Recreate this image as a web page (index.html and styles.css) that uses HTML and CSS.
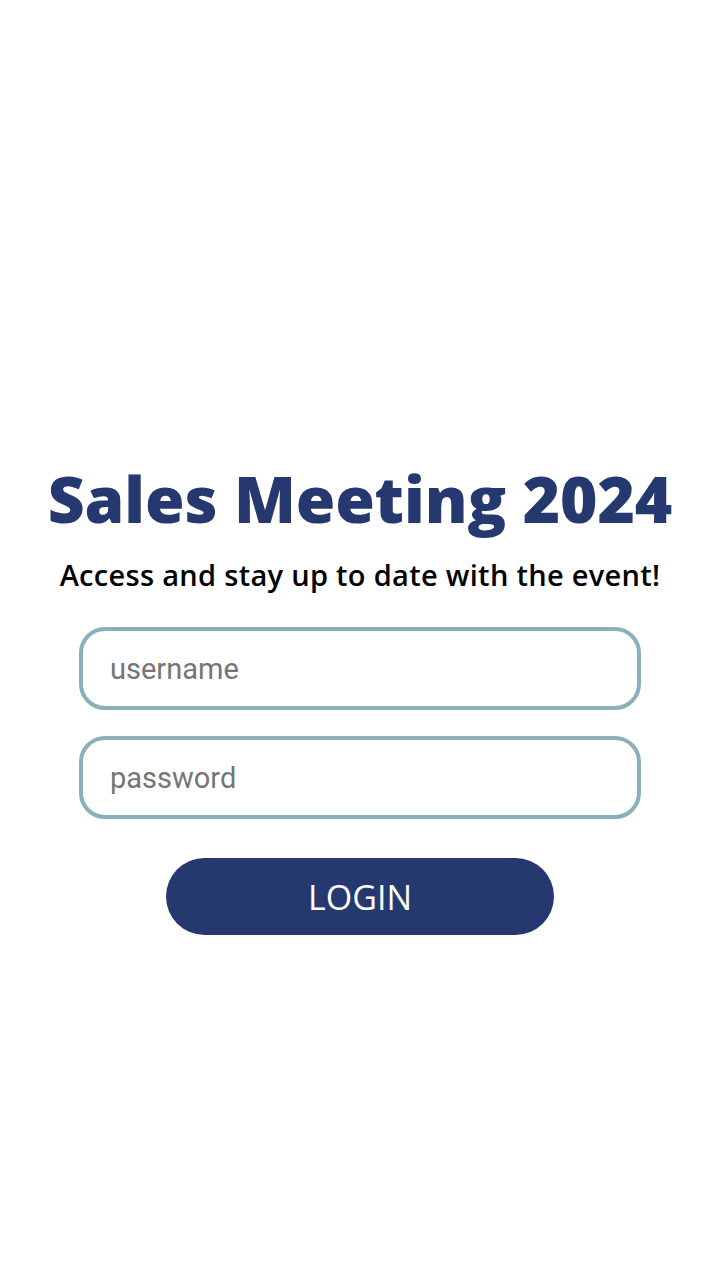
FILE: index.html
```html
<!DOCTYPE html>
<html>
<head>
<meta charset="utf-8">
<link rel="stylesheet" href="styles.css">
</head>
<body>
<main class="page">
  <h1 class="title">Sales Meeting 2024</h1>
  <p class="subtitle">Access and stay up to date with the event!</p>
  <form class="form">
    <input class="field" type="text" placeholder="username">
    <input class="field" type="password" placeholder="password">
    <button class="login" type="button">LOGIN</button>
  </form>
</main>
</body>
</html>
```
FILE: styles.css
```css
html, body {
  margin: 0;
  padding: 0;
  background: #ffffff;
}
.page {
  display: flex;
  flex-direction: column;
  align-items: center;
  padding-top: 459px;
}
.title {
  margin: 0;
  font-family: "Open Sans", sans-serif;
  font-weight: 800;
  font-size: 64px;
  line-height: 80px;
  color: #263870;
  letter-spacing: -0.1px;
}
.subtitle {
  margin: 18px 0 0;
  font-family: "Open Sans", sans-serif;
  font-weight: 600;
  font-size: 29px;
  line-height: 36px;
  letter-spacing: 0.3px;
  color: #000000;
}
.form {
  display: flex;
  flex-direction: column;
  align-items: center;
  margin-top: 34px;
  width: 562px;
}
.field {
  box-sizing: border-box;
  width: 562px;
  height: 83px;
  border: 4px solid #8ab1bb;
  border-radius: 26px;
  padding: 0 27px;
  font-family: Roboto, sans-serif;
  font-size: 29px;
  color: #333;
  outline: none;
  background: #fff;
  margin-bottom: 26px;
}
.field::placeholder {
  color: #757575;
}
.login {
  margin-top: 13px;
  width: 388px;
  height: 77px;
  border: none;
  border-radius: 39px;
  background: #263870;
  color: #ffffff;
  font-family: "Open Sans", sans-serif;
  font-weight: 400;
  font-size: 34px;
  cursor: pointer;
}
```
